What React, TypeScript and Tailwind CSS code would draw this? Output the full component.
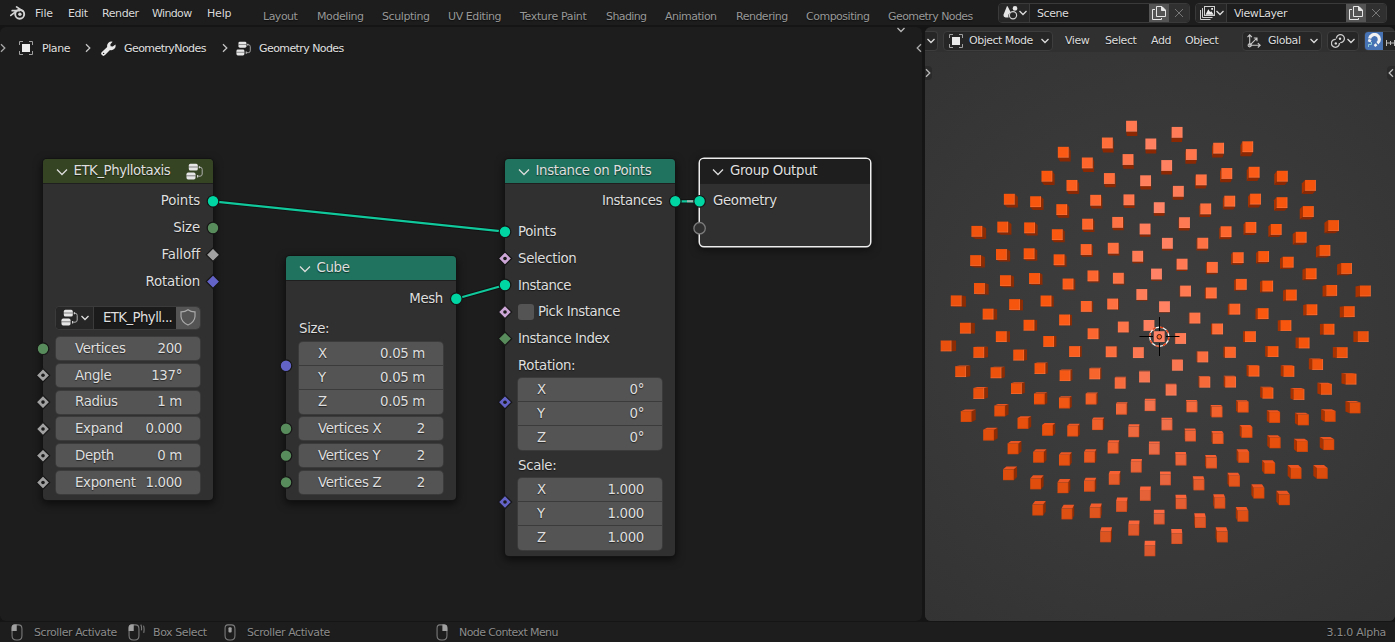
import type { ReactNode } from "react";

const SHADOW = "[text-shadow:0_1px_1px_rgba(0,0,0,0.55)]";

/* ---------- icons ---------- */

function Chevron({ d, className = "" }: { d: "down" | "right" | "left"; className?: string }) {
  const path = d === "down" ? "M1.5 3 L5 6.5 L8.5 3" : d === "right" ? "M3 1.2 L6.8 5 L3 8.8" : "M7 1.2 L3.2 5 L7 8.8";
  return (
    <svg viewBox="0 0 10 10" className={`h-[10px] w-[10px] shrink-0 ${className}`} fill="none" stroke="currentColor" strokeWidth="1.3">
      <path d={path} />
    </svg>
  );
}

function BlenderIcon() {
  return (
    <svg viewBox="0 0 16 14" className="h-[14px] w-4 shrink-0" fill="none" stroke="#d4d4d4">
      <circle cx="9.7" cy="8.2" r="4.5" strokeWidth="1.9" />
      <circle cx="9.9" cy="8.2" r="1.7" fill="#d4d4d4" stroke="none" />
      <path d="M2.2 4.7 H9.5 M6.6 0.9 L12.6 5 M7.2 4.6 L0.8 9.4" strokeWidth="1.7" strokeLinecap="round" />
    </svg>
  );
}

function ObjectIcon() {
  return (
    <svg viewBox="0 0 14 14" className="h-[14px] w-[14px] shrink-0" fill="none" stroke="#a0a0a0">
      <path d="M.5 4 V.5 H4 M10 .5 H13.5 V4 M13.5 10 V13.5 H10 M4 13.5 H.5 V10" />
      <rect x="3" y="3" width="8" height="8" fill="#ececec" stroke="none" />
    </svg>
  );
}

function WrenchIcon() {
  return (
    <svg viewBox="0 0 15 15" className="h-[15px] w-[15px] shrink-0" fill="none">
      <path
        d="M11.6 .7 A4.4 4.4 0 0 0 6.2 5.9 L.9 11 A2.1 2.1 0 0 0 4 14.1 L9 9 A4.4 4.4 0 0 0 14.4 3.4 L11.8 5.6 L9.6 5.3 L9.4 3.2 Z"
        fill="#e8e8e8"
      />
      <circle cx="2.6" cy="12.4" r=".7" fill="#1d1d1d" />
    </svg>
  );
}

function NodeTreeIcon({ small }: { small?: boolean }) {
  return (
    <svg viewBox="0 0 17 17" className={small ? "h-[15px] w-[15px] shrink-0" : "h-[17px] w-[17px] shrink-0"} fill="none">
      <rect x="2.8" y=".8" width="9" height="6.8" rx="1.6" fill="#e6e6e6" />
      <rect x=".5" y="9.6" width="9" height="6.8" rx="1.6" fill="#e6e6e6" />
      <path d="M2.8 4 H11.8 M.5 12.8 H9.5" stroke="#555" strokeWidth=".7" />
      <path d="M12.8 4.2 H14 Q16.2 4.2 16.2 6.4 V11 Q16.2 13.2 14 13.2 H12.2" stroke="#b0b0b0" />
      <path d="M13.4 3.2 V5.2 M11.6 12 V14.4" stroke="#ccc" strokeWidth="1.2" />
    </svg>
  );
}

function SceneIcon() {
  return (
    <svg viewBox="0 0 15 14" className="h-[14px] w-[15px] shrink-0" fill="none">
      <path d="M4 0 Q4.6 0 5 1 L7.8 6.6 A4 4 0 0 0 5.6 11.6 H2.6 Q.4 11.4 .4 9 Z" fill="#e4e4e4" />
      <circle cx="12" cy="2.4" r="2.3" fill="#e4e4e4" />
      <circle cx="10" cy="9.3" r="3.6" stroke="#d0d0d0" strokeWidth="1.2" />
    </svg>
  );
}

function LayersIcon() {
  return (
    <svg viewBox="0 0 15 14" className="h-[14px] w-[15px] shrink-0" fill="none" stroke="#d0d0d0">
      <path d="M.5 4 V13.5 H10.5 M2.5 2 V11.5 H12.5" />
      <rect x="4.5" y=".5" width="10" height="9" />
      <path d="M5.5 8.8 L8.3 3.2 L10.2 6 L11.4 5.2 L13.8 8.8 Z" fill="#ececec" stroke="none" />
      <rect x="11.2" y="2" width="1.8" height="1.8" fill="#ececec" stroke="none" />
    </svg>
  );
}

function CopyIcon() {
  return (
    <svg viewBox="0 0 14 14" className="h-[14px] w-[14px] shrink-0" fill="none" stroke="#e6e6e6">
      <path d="M3 3.5 H.5 V13.5 H9.5 V12" />
      <path d="M4.5 .5 H10 L13.5 4 V10.5 H4.5 Z" />
      <path d="M9.5 .5 V4.5 H13.5 Z" fill="#e6e6e6" />
    </svg>
  );
}

function CloseIcon() {
  return (
    <svg viewBox="0 0 10 10" className="h-[10px] w-[10px]" stroke="#777" strokeWidth="1">
      <path d="M1 1 L9 9 M9 1 L1 9" />
    </svg>
  );
}

function ShieldIcon() {
  return (
    <svg viewBox="0 0 16 17" className="h-[17px] w-4" fill="none" stroke="#a9a9a9" strokeWidth="1.2">
      <path d="M8 .8 Q11 3 15 2.9 V7.5 Q14.6 13 8 16 Q1.4 13 1 7.5 V2.9 Q5 3 8 .8 Z" />
    </svg>
  );
}

function AxesIcon() {
  return (
    <svg viewBox="0 0 14 14" className="h-[14px] w-[14px] shrink-0" fill="none" stroke="#c8c8c8" strokeWidth="1.1">
      <path d="M2.7 1 V11.3 H13 M.5 3.2 L2.7 .8 L4.9 3.2 M10.8 9.1 L13.2 11.3 L10.8 13.5 M2.7 11.3 L9.6 4.4 M6.8 4 H10 V7.2" />
      <circle cx="2.7" cy="11.3" r="1.6" />
    </svg>
  );
}

function PivotIcon() {
  return (
    <svg viewBox="0 0 14 14" className="h-[14px] w-[14px] shrink-0" fill="none" stroke="#c8c8c8" strokeWidth="1.3">
      <path d="M5.4 4.6 A4 4 0 1 1 9.2 8.6" />
      <path d="M8.4 9 A4 4 0 1 1 4.8 5.3" />
      <circle cx="9" cy="4.7" r="1.2" fill="#ddd" stroke="none" />
      <circle cx="4.8" cy="9.4" r="1.2" fill="#ddd" stroke="none" />
    </svg>
  );
}

function MagnetIcon() {
  return (
    <svg viewBox="0 0 15 15" className="h-[15px] w-[15px]" fill="none">
      <path d="M2.6 5.6 A4.9 4.9 0 1 1 10.4 10.3" stroke="#f2f2f2" strokeWidth="3.2" />
      <path d="M1.2 7 L4 8.2 M9.6 11.4 L7.4 13" stroke="#f2f2f2" strokeWidth="2.6" />
      <path d="M1.5 14 V11.5 H4.5 V9" stroke="#8fd0d8" strokeWidth="1" />
    </svg>
  );
}

function MouseIcon({ kind }: { kind: "left" | "drag" | "middle" | "right" }) {
  return (
    <svg viewBox="0 0 16 16" className="h-[17px] w-[17px] shrink-0" fill="none" stroke="#7d7d7d">
      <path d="M3.5 .8 H7 Q10.3 .8 10.3 4.5 V11 Q10.3 15 6.5 15 H5 Q1 15 1 11 V4 Q1 .8 3.5 .8 Z" />
      {(kind === "left" || kind === "drag") && <path d="M.6 6.5 V3.5 Q.6 .4 3.5 .4 H5.4 V6.5 Z" fill="#a0a0a0" stroke="none" />}
      {kind === "right" && <path d="M10.7 6.5 V3.5 Q10.7 .4 7.8 .4 H6 V6.5 Z" fill="#a0a0a0" stroke="none" />}
      {kind === "middle" && <rect x="4.2" y="3" width="3" height="5" rx="1" fill="#a0a0a0" stroke="none" />}
      {kind === "drag" && <path d="M12 .6 Q13.2 2.6 12.6 6 M14.6 1.6 Q15.6 4.6 14.8 8.4" />}
    </svg>
  );
}

/* ---------- top bar ---------- */

function DataBlock({ icon, name }: { icon: ReactNode; name: string }) {
  return (
    <div className="flex h-5 w-[192px] shrink-0 overflow-hidden rounded-[4px] border border-[#3a3a3a] bg-[#1d1d1d] text-[#dcdcdc]">
      <div className="flex w-[31px] items-center justify-between border-r border-[#3a3a3a] bg-[#262626] pr-[2px] pl-1">
        {icon}
        <Chevron d="down" className="h-[9px] w-[9px]" />
      </div>
      <div className="flex flex-1 items-center pl-[7px]">{name}</div>
      <div className="flex w-5 items-center justify-center bg-[#545454]">
        <CopyIcon />
      </div>
      <div className="flex w-5 items-center justify-center bg-[#303030]">
        <CloseIcon />
      </div>
    </div>
  );
}

function TopBar() {
  return (
    <div className={`flex h-[25px] shrink-0 items-start bg-[#1d1d1d] text-[11px] tracking-[-0.42px] text-[#dadada] ${SHADOW}`}>
      <div className="flex h-[25px] w-[35px] shrink-0 items-center pt-px pl-[10px]">
        <BlenderIcon />
      </div>
      <div className="flex h-[25px] shrink-0 items-center pt-[2px]">
        <span className="w-[33px] tracking-[-0.1px]">File</span>
        <span className="w-[34px]">Edit</span>
        <span className="w-[50px]">Render</span>
        <span className="w-[55px] tracking-[-0.65px]">Window</span>
        <span className="w-[56px] tracking-[-0.2px]">Help</span>
      </div>
      <div className="flex h-[25px] w-[735px] shrink-0 items-center pt-[7px] whitespace-nowrap text-[#989898]">
        <span className="w-[54px] tracking-[-0.5px]">Layout</span>
        <span className="w-[65px]">Modeling</span>
        <span className="w-[66px]">Sculpting</span>
        <span className="w-[72px]">UV Editing</span>
        <span className="w-[86px] tracking-[-0.35px]">Texture Paint</span>
        <span className="w-[59px] tracking-[-0.6px]">Shading</span>
        <span className="w-[71px] tracking-[-0.5px]">Animation</span>
        <span className="w-[70px] tracking-[-0.5px]">Rendering</span>
        <span className="w-[82px] tracking-[-0.5px]">Compositing</span>
        <span className="w-[90px] tracking-[-0.58px]">Geometry Nodes</span>
      </div>
      <div className="flex gap-[5px] pt-[3px]">
        <DataBlock icon={<SceneIcon />} name="Scene" />
        <DataBlock icon={<LayersIcon />} name="ViewLayer" />
      </div>
    </div>
  );
}

/* ---------- node editor ---------- */

type NodeProps = { place: string; head: string; title: string; icon?: ReactNode; selected?: boolean; children?: ReactNode };

function Node({ place, head, title, icon, selected, children }: NodeProps) {
  return (
    <div
      className={`absolute flex flex-col overflow-hidden rounded-[4px] bg-[#303030] text-[13.33px] tracking-[-0.33px] text-[#dfdfdf] ${
        selected ? "shadow-[0_0_0_1.5px_#ededed,0_2px_9px_2px_rgba(0,0,0,0.5)]" : "shadow-[0_0_0_1px_#131313,0_3px_9px_1px_rgba(0,0,0,0.6)]"
      } ${place}`}
    >
      <div className={`flex h-6 shrink-0 items-center pr-[10px] ${selected ? "pl-3" : "pl-[12.5px]"} ${head}`}>
        <svg viewBox="0 0 12 12" className="mt-[2px] mr-[6px] h-3 w-3 shrink-0" fill="none" stroke="#dcdcdc" strokeWidth="1.3">
          <path d="M1 3.5 L6 8.5 L11 3.5" />
        </svg>
        <span className="flex-1">{title}</span>
        {icon}
      </div>
      <div className="h-px shrink-0 bg-black/35" />
      {children}
    </div>
  );
}

function Label({ children, right }: { children: ReactNode; right?: boolean }) {
  return <div className={`flex h-[26.8px] shrink-0 items-center px-[13px] ${right ? "justify-end" : ""}`}>{children}</div>;
}

function Field({ label, value }: { label: string; value: string }) {
  return (
    <div className="flex h-[26.8px] shrink-0 items-center px-[13px]">
      <div className="flex h-[23px] w-full items-center justify-between rounded-[4px] bg-[#545454] pr-[18px] pl-[19px] shadow-[0_0_0_1px_#3b3b3b]">
        <span>{label}</span>
        <span>{value}</span>
      </div>
    </div>
  );
}

function Vector({ values, className = "" }: { values: string[]; className?: string }) {
  return (
    <div className={`mx-[13px] flex shrink-0 flex-col overflow-hidden rounded-[4px] bg-[#545454] shadow-[0_0_0_1px_#3b3b3b] ${className}`}>
      {values.map((v, i) => (
        <div key={i} className={`flex h-6 items-center justify-between border-b pr-[18px] pl-[19px] ${i < 2 ? "border-[#3b3b3b]" : "border-transparent"}`}>
          <span>{"XYZ"[i]}</span>
          <span>{v}</span>
        </div>
      ))}
    </div>
  );
}

const TEAL = "#00d6a3";
const GREEN = "#598c5c";
const GREY = "#a1a1a1";
const BLUE = "#6363c7";
const PINK = "#cca6d6";

type Socket = { x: number; y: number; c: string; s: "dot" | "diamond" | "field" };
const sockets: Socket[] = [
  { x: 213, y: 201.3, c: TEAL, s: "dot" },
  { x: 213, y: 228, c: GREEN, s: "dot" },
  { x: 213, y: 254.8, c: GREY, s: "diamond" },
  { x: 213, y: 281.6, c: BLUE, s: "diamond" },
  { x: 43, y: 348.7, c: GREEN, s: "dot" },
  { x: 43, y: 375.3, c: GREY, s: "field" },
  { x: 43, y: 402.1, c: GREY, s: "field" },
  { x: 43, y: 429, c: GREY, s: "field" },
  { x: 43, y: 455.7, c: GREY, s: "field" },
  { x: 43, y: 482.5, c: GREY, s: "field" },
  { x: 456.3, y: 298.7, c: TEAL, s: "dot" },
  { x: 286, y: 365.7, c: BLUE, s: "dot" },
  { x: 286, y: 428.8, c: GREEN, s: "dot" },
  { x: 286, y: 455.6, c: GREEN, s: "dot" },
  { x: 286, y: 482.4, c: GREEN, s: "dot" },
  { x: 675.3, y: 201.3, c: TEAL, s: "dot" },
  { x: 505, y: 231.7, c: TEAL, s: "dot" },
  { x: 505, y: 258.5, c: PINK, s: "field" },
  { x: 505, y: 285, c: TEAL, s: "dot" },
  { x: 505, y: 312, c: PINK, s: "field" },
  { x: 505, y: 338.7, c: GREEN, s: "diamond" },
  { x: 505, y: 402.2, c: BLUE, s: "field" },
  { x: 505, y: 502, c: BLUE, s: "field" },
  { x: 699.6, y: 201.3, c: TEAL, s: "dot" },
];

function Wires() {
  const links = ["M213 201.3 L505 231.7", "M456.3 298.7 L505 285", "M675 201.3 H699"];
  return (
    <svg viewBox="0 27 922 594" className="absolute inset-0 h-[594px] w-[922px]" fill="none">
      {links.map((d) => (
        <g key={d}>
          <path d={d} stroke="#111" strokeWidth="4" />
          <path d={d} stroke="#10c89b" strokeWidth="2.2" />
        </g>
      ))}
      <path d="M687 201.3 H694" stroke="#9fb5b0" strokeWidth="2" />
      {sockets.map(({ x, y, c, s }, i) =>
        s === "dot" ? (
          <circle key={i} cx={x} cy={y} r="5.8" fill={c} stroke="#161616" strokeWidth="1.2" />
        ) : (
          <g key={i}>
            <path d={`M${x} ${y - 6.7} l6.7 6.7 l-6.7 6.7 l-6.7 -6.7 Z`} fill={c} stroke="#161616" strokeWidth="1.2" />
            {s === "field" && <circle cx={x} cy={y} r="1.8" fill="#1a1a1a" />}
          </g>
        ),
      )}
      <circle cx="699.6" cy="228.2" r="5.7" fill="#303030" stroke="#7c7c7c" strokeWidth="1.3" />
    </svg>
  );
}

function NodeEditor() {
  return (
    <div className="relative h-[594px] w-[922px] shrink-0 overflow-hidden rounded-[6px] bg-[#1d1d1d]">
      <div className={`flex h-[42px] items-center pl-[19px] text-[11px] tracking-[-0.42px] text-[#e0e0e0] ${SHADOW}`}>
        <ObjectIcon />
        <span className="ml-[9px] w-[41px]">Plane</span>
        <Chevron d="right" className="text-[#c4c4c4]" />
        <span className="mr-2 ml-2">
          <WrenchIcon />
        </span>
        <span className="w-[96px] tracking-[-0.57px]">GeometryNodes</span>
        <Chevron d="right" className="text-[#c4c4c4]" />
        <span className="mr-2 ml-[6px]">
          <NodeTreeIcon small />
        </span>
        <span className="tracking-[-0.58px]">Geometry Nodes</span>
      </div>
      <Chevron d="right" className="absolute top-[16px] left-[-2px] text-[#a8a8a8]" />
      <Chevron d="left" className="absolute top-[16px] left-[914px] text-[#a8a8a8]" />
      <Chevron d="down" className="absolute top-[-2px] left-[896px] text-[#b8b8b8]" />

      <div className={SHADOW}>
        <Node place="left-[43px] top-[132px] h-[341px] w-[170px]" head="bg-[#354422] tracking-[-0.47px]" title="ETK_Phyllotaxis" icon={<NodeTreeIcon />}>
          <div className="h-[3.5px] shrink-0" />
          <div className="shrink-0 tracking-[-0.15px]">
            <Label right>Points</Label>
            <Label right>Size</Label>
            <Label right>Falloff</Label>
            <Label right>Rotation</Label>
          </div>
          <div className="mx-[13px] mt-[12px] mb-[6.4px] flex h-[22px] shrink-0 overflow-hidden rounded-[4px] bg-[#1b1b1b] shadow-[0_0_0_1px_#3b3b3b]">
            <div className="flex w-[38px] items-center justify-between border-r border-[#3b3b3b] bg-[#262626] pr-[3px] pl-[5px]">
              <NodeTreeIcon />
              <Chevron d="down" />
            </div>
            <span className="flex flex-1 items-center pl-[9px] tracking-[-0.6px]">ETK_Phyll...</span>
            <div className="flex w-6 shrink-0 items-center justify-center bg-[#545454]">
              <ShieldIcon />
            </div>
          </div>
          <Field label="Vertices" value="200" />
          <Field label="Angle" value="137°" />
          <Field label="Radius" value="1 m" />
          <Field label="Expand" value="0.000" />
          <Field label="Depth" value="0 m" />
          <Field label="Exponent" value="1.000" />
        </Node>

        <Node place="left-[286px] top-[229px] h-[244px] w-[170px]" head="bg-[#20735e]" title="Cube">
          <div className="h-[4px] shrink-0" />
          <Label right>Mesh</Label>
          <div className="h-[3.4px] shrink-0" />
          <Label>Size:</Label>
          <Vector values={["0.05 m", "0.05 m", "0.05 m"]} />
          <div className="h-[1.6px] shrink-0" />
          <Field label="Vertices X" value="2" />
          <Field label="Vertices Y" value="2" />
          <Field label="Vertices Z" value="2" />
        </Node>

        <Node place="left-[505px] top-[132px] h-[397px] w-[170px]" head="bg-[#20735e]" title="Instance on Points">
          <div className="h-[3px] shrink-0" />
          <Label right>
            <span className="tracking-[-0.4px]">Instances</span>
          </Label>
          <div className="h-[4.4px] shrink-0" />
          <Label>Points</Label>
          <Label>Selection</Label>
          <Label>
            <span className="tracking-[-0.46px]">Instance</span>
          </Label>
          <Label>
            <span className="mr-[4px] h-4 w-4 rounded-[3px] bg-[#545454]" />
            <span className="tracking-[-0.42px]">Pick Instance</span>
          </Label>
          <Label>
            <span className="tracking-[-0.44px]">Instance Index</span>
          </Label>
          <Label>Rotation:</Label>
          <Vector className="-mt-[0.8px]" values={["0°", "0°", "0°"]} />
          <div className="h-[1.8px] shrink-0" />
          <Label>Scale:</Label>
          <Vector className="-mt-[0.8px]" values={["1.000", "1.000", "1.000"]} />
        </Node>

        <Node place="left-[700px] top-[132px] h-[87px] w-[170px]" head="bg-[#1e1e1e]" title="Group Output" selected>
          <div className="h-[3px] shrink-0" />
          <Label>Geometry</Label>
        </Node>
      </div>
      <Wires />
    </div>
  );
}

/* ---------- 3D viewport ---------- */

const CX = 1159.2;
const CY = 336.6;

const rgb = (c: number[], k: number) => `rgb(${c.map((v) => Math.round(Math.min(255, v * k))).join(",")})`;

function Cubes() {
  return (
    <svg viewBox="925 52 470 569" className="absolute inset-0 h-[569px] w-[470px]">
      {Array.from({ length: 200 }, (_, i) => {
        const a = ((270 - 137.5 * i) * Math.PI) / 180;
        const r = 15.2 * Math.sqrt(i);
        const dx = r * Math.cos(a);
        const dy = -r * Math.sin(a);
        const x = CX + dx;
        const y = CY + dy;
        const h = 5.4;
        const bx = x - dx * 0.022;
        const by = y - dy * 0.022;
        const b = 5.3;
        const t = Math.min(1, Math.abs(dx) / 105);
        const low = Math.max(0, dy / 215);
        const k = 1 - 0.14 * low - 0.08 * Math.pow(Math.abs(dx) / 213, 2);
        const front = [255, 132 - 44 * t - 28 * low * (1 - t), 104 - 90 * t - 46 * low * (1 - t)];
        const sx = dx > 0 ? -1 : 1;
        const sy = dy > 0 ? -1 : 1;
        const side = `M${x + sx * h} ${y - h} L${bx + sx * b} ${by - b} V${by + b} L${x + sx * h} ${y + h} Z`;
        const cap = `M${x - h} ${y + sy * h} L${bx - b} ${by + sy * b} H${bx + b} L${x + h} ${y + sy * h} Z`;
        return (
          <g key={i}>
            <path d={side} fill={dx > 0 ? "#a83200" : "#8c2c04"} />
            <path d={cap} fill={dy > 0 ? rgb([255, 92 + 14 * (1 - t), 36 + 30 * (1 - t)], 1 - 0.08 * t) : "#8a2804"} />
            <rect x={x - h} y={y - h} width={2 * h} height={2 * h} fill={rgb(front, k)} />
            <path d={`M${x - h} ${y + h - 0.4} H${x + h} M${x + h - 0.4} ${y - h} V${y + h}`} stroke={dy > 60 ? "#c03c0c" : "#ff9a78"} strokeOpacity="0.35" strokeWidth=".8" />
          </g>
        );
      })}
      <g fill="none">
        <circle cx="1159.3" cy="336.7" r="9.6" stroke="#f4f4f4" strokeWidth="1.3" />
        <circle cx="1159.3" cy="336.7" r="9.6" stroke="#e23c10" strokeWidth="1.3" strokeDasharray="3.77 3.77" />
        <path d="M1159.5 317 V331 M1159.5 343 V356 M1139.5 336.5 H1153 M1166 336.5 H1179.5" stroke="#000" />
        <circle cx="1159.3" cy="336.8" r="2.3" fill="#f86a30" stroke="#4a1a08" strokeWidth="1" />
      </g>
    </svg>
  );
}

function Viewport() {
  const box = "flex h-5 shrink-0 items-center rounded-[4px] border border-[#3d3d3d] bg-[#262626]";
  return (
    <div className="flex h-[594px] w-[470px] shrink-0 flex-col overflow-hidden rounded-[6px] bg-[#303030]">
      <div className={`flex h-[25px] shrink-0 items-center pt-[2px] text-[11px] tracking-[-0.42px] text-[#dcdcdc] ${SHADOW}`}>
        <div className={`${box} w-[13px] justify-center rounded-l-none border-l-0`}>
          <Chevron d="down" className="h-[9px] w-[9px]" />
        </div>
        <div className={`${box} ml-[5px] w-[110px] pr-[2px] pl-[5px]`}>
          <ObjectIcon />
          <span className="ml-[6px] flex-1 tracking-[-0.5px] whitespace-nowrap">Object Mode</span>
          <Chevron d="down" className="h-[9px] w-[9px]" />
        </div>
        <span className="ml-3 w-10 shrink-0">View</span>
        <span className="w-[46px] shrink-0">Select</span>
        <span className="w-[34px] shrink-0">Add</span>
        <span className="w-[57px] shrink-0">Object</span>
        <div className={`${box} w-20 pr-[2px] pl-[4px]`}>
          <AxesIcon />
          <span className="ml-[7px] flex-1">Global</span>
          <Chevron d="down" className="h-[9px] w-[9px]" />
        </div>
        <div className={`${box} ml-[5px] w-[32px] justify-between pr-[2px] pl-[3px]`}>
          <PivotIcon />
          <Chevron d="down" className="h-[9px] w-[9px]" />
        </div>
        <div className="ml-[5px] flex h-5 w-[37px] shrink-0 items-center overflow-hidden rounded-l-[4px] border border-[#3d3d3d] bg-[#262626]">
          <div className="flex h-5 w-[18px] shrink-0 items-center justify-center bg-[#4772b3]">
            <MagnetIcon />
          </div>
          <svg viewBox="0 0 10 10" className="mt-1 ml-[3px] h-[10px] w-[10px] shrink-0" stroke="#bbb" fill="none">
            <path d="M.5 2 V8 M.5 5 H10 M4.5 3 V7 M8.5 2 V8" />
          </svg>
        </div>
      </div>
      <div className="relative h-[569px] bg-[radial-gradient(circle_at_50%_50%,#3e3e3e_0%,#3a3a3a_45%,#333333_100%)]">
        <Cubes />
        <div className="absolute top-[14px] left-0 flex h-[14px] w-[7px] items-center justify-center rounded-r-[4px] bg-[#2a2a2a] text-[#b8b8b8]">
          <Chevron d="right" className="-ml-[2px]" />
        </div>
        <div className="absolute top-[14px] right-0 flex h-[14px] w-[8px] items-center justify-center rounded-l-[4px] bg-[#2a2a2a] text-[#b8b8b8]">
          <Chevron d="left" />
        </div>
      </div>
    </div>
  );
}

/* ---------- status bar ---------- */

function StatusBar() {
  return (
    <div className={`flex h-5 shrink-0 items-center bg-[#1d1d1d] pl-[11px] text-[11px] tracking-[-0.42px] whitespace-nowrap text-[#8b8b8b] ${SHADOW}`}>
      <MouseIcon kind="left" />
      <span className="ml-[6px] w-[94px]">Scroller Activate</span>
      <MouseIcon kind="drag" />
      <span className="ml-[8px] w-[71px]">Box Select</span>
      <MouseIcon kind="middle" />
      <span className="ml-[6px] w-[189px]">Scroller Activate</span>
      <MouseIcon kind="right" />
      <span className="ml-[6px] flex-1 tracking-[-0.6px]">Node Context Menu</span>
      <span className="pr-[9px] tracking-[-0.3px]">3.1.0 Alpha</span>
    </div>
  );
}

export default function App() {
  return (
    <div className="flex h-[642px] w-[1395px] flex-col overflow-hidden bg-[#151515] font-['DejaVu_Sans',sans-serif] leading-none">
      <TopBar />
      <div className="flex h-[597px] shrink-0 gap-[3px] pt-[2px] pb-[1px]">
        <NodeEditor />
        <Viewport />
      </div>
      <StatusBar />
    </div>
  );
}
